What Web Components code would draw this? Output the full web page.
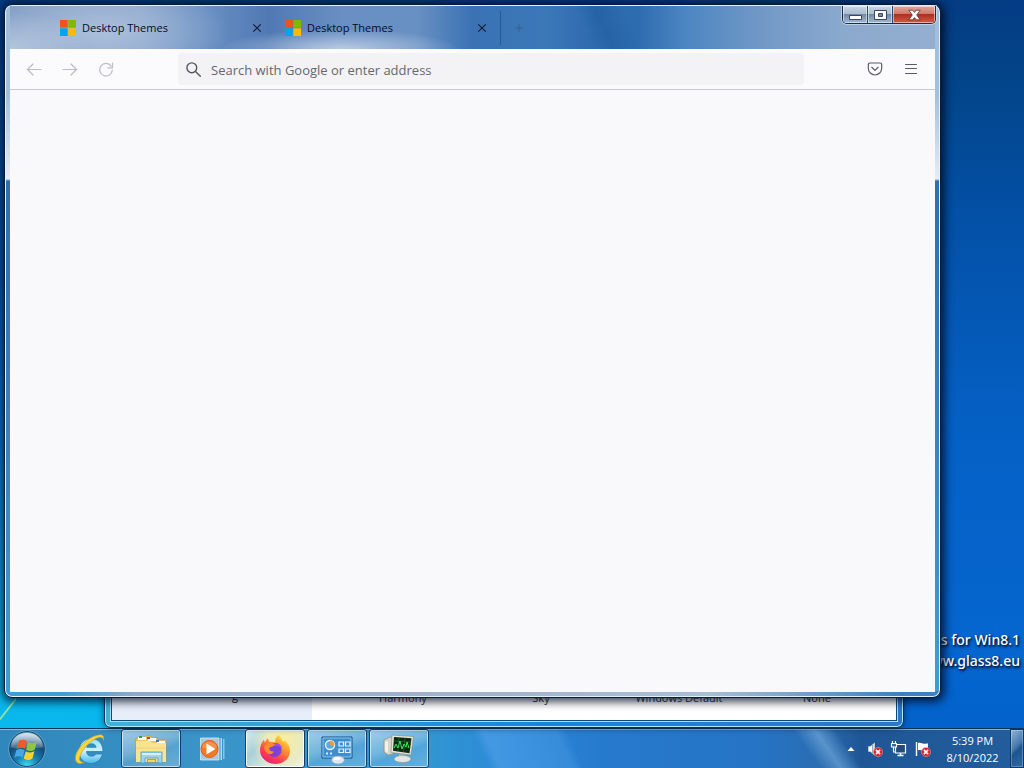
<!DOCTYPE html>
<html lang="en">
<head>
<meta charset="utf-8">
<meta name="viewport" content="width=device-width, initial-scale=1">
<title>Desktop</title>
<style>
html, body {
    height: 100%;
    margin: 0;
}
body {
    font-family: "Open Sans", "Noto Sans", sans-serif;
    font-size: 11px;
    overflow: hidden;
}
</style>
</head>
<body>
<aero-desktop>
    <desktop-label slot="label"></desktop-label>
    <themes-window slot="windows"></themes-window>
    <browser-window slot="windows">
        <browser-tab slot="tabs">Desktop Themes</browser-tab>
        <browser-tab slot="tabs" class="last">Desktop Themes</browser-tab>
    </browser-window>
    <task-bar slot="taskbar"></task-bar>
</aero-desktop>

<script>
class AeroDesktop extends HTMLElement {
    constructor() {
        super();
        this.attachShadow({ mode: 'open' });
    }

    connectedCallback() {
        this.shadowRoot.innerHTML = `
            <style>
            :host {
                display: flex;
                flex-direction: column;
                height: 100vh;
                overflow: hidden;
                background:
                    linear-gradient(128deg, transparent 44%, #4fd0b0 47%, #b5efa0 50%, #4fd0b0 53%, transparent 56%) 0 calc(100% - 48px) / 16px 22px no-repeat,
                    radial-gradient(ellipse 460px 560px at 40px 108%, #06c2f2 0%, #0bb0ea 35%, rgba(8, 140, 220, 0.5) 70%, transparent 100%),
                    linear-gradient(180deg, #043c84 0%, #034488 10%, #0350a6 28%, #0560c4 55%, #0566d0 85%, #0260c8 100%);
            }
            .area {
                flex: 1;
                position: relative;
            }
            </style>
            <div class="area">
                <slot name="label"></slot>
                <slot name="windows"></slot>
            </div>
            <slot name="taskbar"></slot>
        `;
    }
}

class DesktopLabel extends HTMLElement {
    constructor() {
        super();
        this.attachShadow({ mode: 'open' });
    }

    connectedCallback() {
        this.shadowRoot.innerHTML = `
            <style>
            :host {
                display: block;
                position: absolute;
                right: 4px;
                bottom: 57px;
                text-align: right;
                color: #fff;
                font-family: "Noto Sans", "Open Sans", sans-serif;
                font-size: 14px;
                font-weight: 500;
                line-height: 21px;
                text-shadow: 1px 1px 2px #001a40, 1px 2px 3px #001a40;
                white-space: nowrap;
            }
            </style>
            <div>Aero Glass for Win8.1</div>
            <div>www.glass8.eu</div>
        `;
    }
}

// Window behind the browser, only its lower edge is visible
class ThemesWindow extends HTMLElement {
    constructor() {
        super();
        this.attachShadow({ mode: 'open' });
    }

    connectedCallback() {
        this.shadowRoot.innerHTML = `
            <style>
            :host {
                display: flex;
                position: absolute;
                left: 104px;
                right: 120px;
                top: 60%;
                bottom: 0;
                box-sizing: border-box;
                padding: 6px;
                border: 1px solid #0a3358;
                border-radius: 7px;
                background: linear-gradient(90deg, #3fb2d6 0%, #2f9fd8 25%, #1585e0 55%, #2a78d0 88%, #2a78c8 100%);
                box-shadow: inset 0 0 0 1px #b9e4f5, 0 0 6px rgba(0, 20, 50, 0.6);
            }
            .content {
                flex: 1;
                display: flex;
                border: 1px solid #0d4a78;
                outline: 1px solid #a8def2;
                background: #fff;
            }
            nav {
                width: 200px;
                background: #e8eef9;
                display: flex;
                align-items: flex-end;
                justify-content: center;
            }
            nav span {
                padding: 0 0 17px 46px;
            }
            ul {
                flex: 1;
                display: grid;
                grid-template-columns: 182px 94px 182px 94px;
                align-content: end;
                margin: 0;
                padding: 0 0 15px;
                list-style: none;
                text-align: center;
                color: #333;
            }
            </style>
            <div class="content">
                <nav><span>g</span></nav>
                <ul>
                    <li>Harmony</li>
                    <li>Sky</li>
                    <li>Windows Default</li>
                    <li>None</li>
                </ul>
            </div>
        `;
    }
}

class BrowserTab extends HTMLElement {
    constructor() {
        super();
        this.attachShadow({ mode: 'open' });
    }

    connectedCallback() {
        this.shadowRoot.innerHTML = `
            <style>
            :host {
                display: flex;
                align-items: center;
                gap: 6px;
                box-sizing: border-box;
                width: 225px;
                height: 34px;
                padding: 0 9px 0 10px;
                color: #060a1c;
            }
            :host(.last) {
                border-right: 1px solid rgba(20, 60, 120, 0.45);
                width: 226px;
            }
            .title {
                flex: 1;
                white-space: nowrap;
            }
            button {
                display: flex;
                padding: 4px;
                border: 0;
                background: none;
            }
            </style>
            <svg width="16" height="16" viewBox="0 0 16 16">
                <path fill="#f25022" d="M0 0h7.7v7.7H0z"/>
                <path fill="#7fba00" d="M8.3 0H16v7.7H8.3z"/>
                <path fill="#00a4ef" d="M0 8.3h7.7V16H0z"/>
                <path fill="#ffb900" d="M8.3 8.3H16V16H8.3z"/>
            </svg>
            <span class="title"><slot></slot></span>
            <button type="button" aria-label="Close tab">
                <svg width="10" height="10" viewBox="0 0 10 10" stroke="#10182c" stroke-width="1.1"><path d="M1.3 1.3l7.4 7.4M8.7 1.3L1.3 8.7"/></svg>
            </button>
        `;
    }
}

class CaptionButtons extends HTMLElement {
    constructor() {
        super();
        this.attachShadow({ mode: 'open' });
    }

    connectedCallback() {
        this.shadowRoot.innerHTML = `
            <style>
            :host {
                display: flex;
                height: 18px;
                box-sizing: border-box;
                border: 1px solid #1d2c48;
                border-top: 0;
                border-radius: 0 0 5px 5px;
                overflow: hidden;
                box-shadow: 0 0 0 1px rgba(220, 235, 250, 0.6);
            }
            button {
                display: flex;
                align-items: center;
                justify-content: center;
                width: 25px;
                padding: 0;
                border: 0;
                border-right: 1px solid #33486a;
                background: linear-gradient(#c8d5e4 0, #a9bbd0 48%, #7189a8 50%, #a2b9d2 100%);
                box-shadow: inset 0 0 0 1px rgba(255, 255, 255, 0.5);
            }
            .close {
                width: 42px;
                border-right: 0;
                background: linear-gradient(#e3a79b 0, #cf7768 48%, #b02f1c 50%, #cf5d44 100%);
            }
            </style>
            <button type="button" aria-label="Minimize">
                <svg width="13" height="12" viewBox="0 0 13 12"><path fill="#fff" stroke="#3b4760" d="M.5 6.5h12v4H.5z"/></svg>
            </button>
            <button type="button" aria-label="Maximize">
                <svg width="13" height="12" viewBox="0 0 13 12"><path fill="#fff" fill-rule="evenodd" stroke="#3b4760" d="M.5 1.5h12v9H.5zM4.5 4.5v3h4v-3z"/></svg>
            </button>
            <button type="button" class="close" aria-label="Close">
                <svg width="13" height="12" viewBox="0 0 13 12"><path fill="#fff" stroke="#5b3038" stroke-width=".8" d="M.8 1.2h4l1.7 2.2 1.700-2.200h4L8.700 6l3.500 4.800h-4L6.500 8.600l-1.700 2.200h-4L4.300 6z"/></svg>
            </button>
        `;
    }
}

class BrowserToolbar extends HTMLElement {
    constructor() {
        super();
        this.attachShadow({ mode: 'open' });
    }

    connectedCallback() {
        this.shadowRoot.innerHTML = `
            <style>
            :host {
                display: flex;
                align-items: center;
                box-sizing: border-box;
                height: 41px;
                padding: 0 6px;
                background: #fbfbfe;
                border-bottom: 1px solid #c9c9ce;
            }
            button {
                display: flex;
                align-items: center;
                justify-content: center;
                width: 36px;
                height: 32px;
                padding: 0;
                border: 0;
                background: none;
                color: #5b5b66;
            }
            button:disabled {
                color: #bcbcc1;
            }
            svg {
                fill: none;
                stroke: currentColor;
                stroke-linecap: round;
                stroke-linejoin: round;
            }
            label {
                flex: 1;
                display: flex;
                align-items: center;
                gap: 9px;
                height: 32px;
                margin: 0 53px 0 54px;
                padding: 0 8px 0 7px;
                box-sizing: border-box;
                border-radius: 4px;
                background: #f3f3f6;
                color: #55555d;
            }
            input {
                flex: 1;
                min-width: 0;
                padding: 2px 0 0;
                border: 0;
                outline: 0;
                background: none;
                font-family: inherit;
                font-size: 13px;
                color: #15141a;
            }
            input::placeholder {
                color: #66666e;
                opacity: 1;
            }
            </style>
            <button type="button" aria-label="Back" disabled>
                <svg width="16" height="16" viewBox="0 0 16 16" stroke-width="1.2"><path d="M15 8.500H1.500M7 3L1.500 8.500 7 14"/></svg>
            </button>
            <button type="button" aria-label="Forward" disabled>
                <svg width="16" height="16" viewBox="0 0 16 16" stroke-width="1.2"><path d="M1 8.500h13.500M9 3l5.500 5.500L9 14"/></svg>
            </button>
            <button type="button" aria-label="Reload" disabled>
                <svg width="16" height="16" viewBox="0 0 16 16" stroke-width="1.2"><path d="M13.2 5.100A6.300 6.300 0 1 0 14.300 9.100M14.500 2v4.800H9.700"/></svg>
            </button>
            <label>
                <svg width="17" height="17" viewBox="0 0 17 17" stroke-width="1.4"><circle cx="6.8" cy="6.8" r="4.9"/><path d="M10.500 10.500l4.800 4.800"/></svg>
                <input type="text" placeholder="Search with Google or enter address" aria-label="Search with Google or enter address">
            </label>
            <button type="button" aria-label="Save to Pocket">
                <svg width="16" height="16" viewBox="0 0 16 16" stroke-width="1.2"><path d="M3 2h10a1.700 1.700 0 0 1 1.700 1.700v3.600a6.700 6.700 0 0 1-13.400 0V3.700A1.700 1.700 0 0 1 3 2zM4.800 6.300L8 9.400l3.200-3.100"/></svg>
            </button>
            <button type="button" aria-label="Open application menu">
                <svg width="14" height="14" viewBox="0 0 14 14" stroke-width="1.1"><path d="M1.500 2.500h11M1.500 6.500h11M1.500 11.500h11"/></svg>
            </button>
        `;
    }
}

class BrowserWindow extends HTMLElement {
    constructor() {
        super();
        this.attachShadow({ mode: 'open' });
    }

    connectedCallback() {
        this.shadowRoot.innerHTML = `
            <style>
            :host {
                display: flex;
                flex-direction: column;
                position: absolute;
                left: 4px;
                right: 83px;
                top: 4px;
                bottom: 30px;
                box-sizing: border-box;
                padding: 1px 5px 5px;
                border: 1px solid #061c3c;
                border-radius: 8px;
                background:
                    linear-gradient(90deg, transparent 6%, #8ea9cb 14%, #a3b3c9 50%, #a9bfd5 75%, #3f80bd 96%) 0 100% / 100% 6px no-repeat,
                    linear-gradient(180deg, #9fbddb 0, #a4bfdd 90px, #e6ecf4 174px, #2f6fae 176px, #3c80bc 60%, #3f9fd0 100%);
                box-shadow: inset 0 0 0 1px #e4f1fb, 1px 1px 8px 3px rgba(0, 8, 28, 0.75);
            }
            header {
                display: flex;
                align-items: center;
                height: 43px;
                padding-left: 40px;
                background:
                    radial-gradient(ellipse 120px 20px at 330px 100%, rgba(205, 218, 236, 0.8), rgba(205, 218, 236, 0.4) 50%, transparent),
                    radial-gradient(ellipse 130px 50px at 90px 60%, rgba(190, 206, 228, 0.7), rgba(190, 206, 228, 0.3) 60%, transparent),
                    radial-gradient(ellipse 80px 36px at 0 100%, rgba(200, 212, 228, 0.7), transparent),
                    linear-gradient(68deg, transparent 62%, rgba(22, 82, 150, 0.35) 64%, transparent 67%),
                    linear-gradient(90deg, #7d9ac2 0, #84a0c8 14%, #6a90c2 21%, #5079b4 28%, #6a90c2 36%, #6890c2 44%, #3a72b4 50%, #3b78b8 58%, #2e6aae 63%, #2e6cb0 68%, #4c86c2 73%, #7098c6 81%, #8ba9cd 90%, #94afd0 100%);
            }
            .new-tab {
                display: flex;
                padding: 4px;
                margin-left: 9px;
                border: 0;
                background: none;
            }
            caption-buttons {
                align-self: flex-start;
                margin: 0 -1px 0 auto;
            }
            main {
                flex: 1;
                background: #f9f9fb;
            }
            </style>
            <header>
                <slot name="tabs"></slot>
                <button type="button" class="new-tab" aria-label="New tab">
                    <svg width="10" height="10" viewBox="0 0 10 10" stroke="#3d5f85" stroke-width="1"><path d="M5 1v8M1 5h8"/></svg>
                </button>
                <caption-buttons></caption-buttons>
            </header>
            <browser-toolbar></browser-toolbar>
            <main></main>
        `;
    }
}

class TaskButton extends HTMLElement {
    constructor() {
        super();
        this.attachShadow({ mode: 'open' });
    }

    connectedCallback() {
        this.shadowRoot.innerHTML = `
            <style>
            :host {
                display: block;
                width: 60px;
            }
            button {
                display: flex;
                align-items: center;
                justify-content: center;
                box-sizing: border-box;
                width: 100%;
                height: 100%;
                padding: 0;
                border: 1px solid transparent;
                border-radius: 3px;
                background: none;
            }
            :host([open]) button {
                border-color: #123f6e;
                background: linear-gradient(160deg, rgba(255, 255, 255, 0.55) 0, rgba(255, 255, 255, 0.3) 45%, rgba(255, 255, 255, 0.15) 60%, rgba(255, 255, 255, 0.25) 100%);
                box-shadow: inset 0 0 0 1px rgba(255, 255, 255, 0.6);
            }
            :host([active]) button {
                background: radial-gradient(circle at 65% 30%, #f8eea0 0, #e9ebc0 40%, transparent 70%), linear-gradient(135deg, #e0eef0 0, #a8cfd8 30%, #dfe7d8 60%, #f6f6e6 100%);
                box-shadow: inset 0 0 0 1px #fff;
            }
            </style>
            <button type="button" aria-label="${this.getAttribute('name')}"><slot></slot></button>
        `;
    }
}

class SystemTray extends HTMLElement {
    constructor() {
        super();
        this.attachShadow({ mode: 'open' });
    }

    connectedCallback() {
        this.shadowRoot.innerHTML = `
            <style>
            :host {
                display: flex;
                align-items: stretch;
                color: #fff;
            }
            button {
                display: flex;
                align-items: center;
                justify-content: center;
                width: 24px;
                padding: 0;
                border: 0;
                background: none;
            }
            time {
                display: flex;
                flex-direction: column;
                justify-content: center;
                width: 75px;
                text-align: center;
                line-height: 17px;
            }
            .peek {
                width: 14px;
                border: 1px solid #14355c;
                background: linear-gradient(135deg, #8fb4d6 0, #4478ad 45%, #1d5590 55%, #2f69a4 100%);
                box-shadow: inset 0 0 0 1px rgba(255, 255, 255, 0.25);
            }
            </style>
            <button type="button" aria-label="Show hidden icons">
                <svg width="8" height="6" viewBox="0 0 8 6"><path fill="#fff" d="M4 1l3.500 4h-7z"/></svg>
            </button>
            <button type="button" aria-label="Volume muted">
                <svg width="18" height="18" viewBox="0 0 18 18">
                    <path fill="#fff" stroke="#2d4c70" stroke-width=".6" d="M2 6h2.400L9 2v14l-4.600-4H2z"/>
                    <path fill="#9aa9bb" d="M6 5l1.400-1.200v10.400L6 13z"/>
                    <circle cx="12" cy="12" r="4.600" fill="#d8242c" stroke="#f3a8a8" stroke-width=".5"/>
                    <path stroke="#fff" stroke-width="1.600" d="M9.900 9.900l4.200 4.200M14.100 9.900l-4.200 4.200"/>
                </svg>
            </button>
            <button type="button" aria-label="Network">
                <svg width="18" height="18" viewBox="0 0 18 18" fill="none" stroke="#fff">
                    <path fill="#244c78" stroke-width="1.200" d="M5.500 4.500h10v8.500h-10z"/>
                    <path stroke-width="1.500" d="M7.500 15.500h6M10.500 13v2"/>
                    <path fill="#3b6594" stroke-width="1.100" d="M1.500 3.500h5v3.500h-5zM2.500 1v2M5.500 1v2M3.500 7v5H5.500"/>
                </svg>
            </button>
            <button type="button" aria-label="Action Center">
                <svg width="18" height="18" viewBox="0 0 18 18">
                    <path stroke="#fff" stroke-width="1.400" d="M2.500 2v14"/>
                    <path fill="#fff" d="M4 3c3-.8 4 .8 6 .8 1.700 0 2.500-.5 4-.3v7c-2-.4-3 .4-5 0-1.700-.4-3-.9-5-.3z"/>
                    <circle cx="12" cy="12" r="4.600" fill="#d8242c" stroke="#f3a8a8" stroke-width=".5"/>
                    <path stroke="#fff" stroke-width="1.600" d="M9.900 9.900l4.200 4.200M14.100 9.900l-4.200 4.200"/>
                </svg>
            </button>
            <time datetime="2022-08-10T17:39"><span>5:39 PM</span><span>8/10/2022</span></time>
            <button type="button" class="peek" aria-label="Show desktop"></button>
        `;
    }
}

class TaskBar extends HTMLElement {
    constructor() {
        super();
        this.attachShadow({ mode: 'open' });
    }

    connectedCallback() {
        this.shadowRoot.innerHTML = `
            <style>
            :host {
                display: flex;
                align-items: stretch;
                gap: 2px;
                height: 40px;
                box-sizing: border-box;
                border-top: 1px solid #0a3560;
                box-shadow: inset 0 1px 0 rgba(190, 225, 245, 0.6);
                background:
                    linear-gradient(65deg, transparent 47%, rgba(90, 165, 235, 0.5) 48%, rgba(90, 165, 235, 0.3) 55%, transparent 56%),
                    linear-gradient(55deg, transparent 78%, rgba(120, 175, 225, 0.6) 80%, transparent 82%),
                    linear-gradient(90deg, #2f86bb 0, #3a94c8 20%, #3296d2 42%, #2a88d8 50%, #2679cc 60%, #2574c6 74%, #2b6db2 80%, #1f5796 84%, #235d9b 100%);
            }
            .start {
                display: flex;
                align-items: center;
                justify-content: center;
                width: 57px;
                padding: 0 3px 0 0;
                border: 0;
                background: none;
            }
            system-tray {
                margin-left: auto;
            }
            </style>
            <button type="button" class="start" aria-label="Start">
                <svg width="38" height="38" viewBox="0 0 38 38">
                    <defs>
                        <radialGradient id="orb" cx=".5" cy="1" r=".95">
                            <stop offset="0" stop-color="#46e0f4"/>
                            <stop offset=".35" stop-color="#1583b4"/>
                            <stop offset=".7" stop-color="#164a78"/>
                            <stop offset="1" stop-color="#6f9bb8"/>
                        </radialGradient>
                        <linearGradient id="shine" x2="0" y2="1">
                            <stop offset="0" stop-color="#fff" stop-opacity=".75"/>
                            <stop offset="1" stop-color="#fff" stop-opacity=".15"/>
                        </linearGradient>
                    </defs>
                    <circle cx="19" cy="19" r="17.500" fill="url(#orb)" stroke="#12395c"/>
                    <circle cx="19" cy="19" r="18.300" fill="none" stroke="#8fc3de" stroke-width=".7" opacity=".7"/>
                    <path fill="url(#shine)" d="M3 17C4 8 10 3 19 3s15 5 16 14c-7 3-10-1-16 0S9 20 3 17z"/>
                    <g transform="translate(-3.500 -3) scale(1.180)">
                        <path fill="#ef5a28" d="M12 12c2.500-1.600 4.600-1.500 7 0l-1.700 6.600c-2.400-1.500-4.500-1.600-7 0z"/>
                        <path fill="#8fc63d" d="M20 12.700c2.500 1.500 4.600 1.400 7.500-.2l-1.800 6.600c-2.800 1.700-5 1.700-7.400.2z"/>
                        <path fill="#49a6e8" d="M10 19.800c2.500-1.600 4.600-1.500 7 0l-1.700 6.200c-2.400-1.500-4.500-1.600-7 0z"/>
                        <path fill="#fdd032" d="M18 20.500c2.500 1.500 4.600 1.400 7.400-.2l-1.700 6.300c-2.900 1.700-5 1.700-7.400.2z"/>
                    </g>
                </svg>
            </button>
            <task-button name="Internet Explorer">
                <svg width="34" height="34" viewBox="0 0 34 34">
                    <defs>
                        <linearGradient id="ie" x2="0" y2="1"><stop offset="0" stop-color="#8fe0fb"/><stop offset=".5" stop-color="#cdf1fd"/><stop offset="1" stop-color="#45b8ea"/></linearGradient>
                    </defs>
                    <path fill="url(#ie)" stroke="#2383b8" stroke-width=".8" fill-rule="evenodd" d="M31 19.500H14.500c.2 3 2.200 4.700 5 4.700 2 0 3.500-.7 4.300-2.100h6.600C29 27.500 25 31.500 19 31.500c-7 0-12-5-12-12.300S12 6.500 19 6.500c7.500 0 12 5.200 12 13zM14.700 15.300h9.400c-.3-2.400-2-3.600-4.600-3.600s-4.300 1.300-4.800 3.600z"/>
                    <path fill="#f9d53a" stroke="#c9962a" stroke-width=".6" d="M31.500 8.500c.8-3.600-.2-5.900-3.500-5.700C21 3.200 11 9.500 5.500 19 2 25 2.900 31 7.500 31.500c1.600.2 3.500-.5 5-1.500-3.200.8-5.300-1-4.900-4C8.300 20 16 10 24 6.500c4.500-2 7-1.500 7.500 2z"/>
                </svg>
            </task-button>
            <task-button name="Windows Explorer" open>
                <svg width="34" height="32" viewBox="0 0 34 32">
                    <path fill="#e8c95f" stroke="#b9933a" stroke-width=".6" d="M2 5h8l1-2h6l1 2h5l1 2h8v22H2z"/>
                    <path fill="#fff" d="M4 4h8v3H4zM14 5h8v3h-8zM23 8h8v3h-8z"/>
                    <path fill="#3f9b47" d="M5 3h3v2H5z"/>
                    <path fill="#c8452f" d="M13 4h3v2h-3z"/>
                    <path fill="#3479c0" d="M22 7h3v2h-3z"/>
                    <path fill="#f8e38f" d="M2 8h14l2 2h14v19H2z"/>
                    <path fill="#efd272" d="M2 14h30v2H2z" opacity=".5"/>
                    <path fill="#9bd4ef" stroke="#4a9cc8" stroke-width=".8" d="M7 19h21v11h-4v-5H11v5H7z"/>
                    <path fill="#d9f1fb" d="M8 20h19v2H8z"/>
                    <path fill="#6aaad0" d="M13 26h9v3h-9z"/>
                    <path fill="#f3d56b" d="M14 27h7v2h-7z"/>
                </svg>
            </task-button>
            <task-button name="Windows Media Player">
                <svg width="28" height="26" viewBox="0 0 28 26">
                    <path fill="#b9dcf0" d="M24 3h1.500v20H24z" opacity=".65"/>
                    <path fill="#c9e6f5" d="M21.500 2H23v22h-1.500z" opacity=".85"/>
                    <path fill="#a9c9df" stroke="#d5eaf5" stroke-width=".8" d="M1.500 2h18.500v22H1.500z"/>
                    <circle cx="10.500" cy="13" r="8.500" fill="#f07a26" stroke="#d9601a"/>
                    <path fill="#f8a560" d="M3 11a8 8 0 0 1 15 0c-5 2-10 2-15 0z" opacity=".6"/>
                    <path fill="#fff" d="M7.500 7.500l9 5.500-9 5.500z"/>
                </svg>
            </task-button>
            <task-button name="Firefox" open active>
                <svg width="32" height="32" viewBox="0 0 32 32">
                    <defs>
                        <linearGradient id="fx" x1=".85" x2=".2" y2="1"><stop offset="0" stop-color="#fff04d"/><stop offset=".35" stop-color="#ff9a2e"/><stop offset=".7" stop-color="#ff3f4f"/><stop offset="1" stop-color="#e3188a"/></linearGradient>
                    </defs>
                    <path fill="url(#fx)" d="M19 2c3 2.300 4.200 4.400 4.600 6.500 1.100.2 1.600-.4 1.500-1.500C29.500 10.500 31 14 31 18c0 7.500-6.500 13-14.500 13S1 25 1 17.500c0-4.500 1.500-8 3.800-10.700l.8 2.400L8.800 5l1.500 4c2-.6 4-.4 5.700.5C16 6.500 17 4 19 2z"/>
                    <circle cx="15.500" cy="17" r="7" fill="#7a42d8"/>
                    <path fill="#a34cf0" d="M14 11c4-2.500 9 .5 9 5-1.500-2.500-4-3.500-7-3z"/>
                    <path fill="#ff8d2d" d="M5 14c2-4 6-5 11-3-1 2.500-3 3-5.500 3.500-.8 2.500 1.500 4.500 4.500 4-1 2.500-4.500 3.500-7 1.500-1.500-1.200-2.700-3-3-6z"/>
                </svg>
            </task-button>
            <task-button name="Personalization" open>
                <svg width="34" height="32" viewBox="0 0 34 32">
                    <path fill="#3f8fd0" stroke="#174f86" d="M2 4h30v21H2z"/>
                    <path fill="none" stroke="#8cc6ee" d="M3 5h28v19H3z"/>
                    <circle cx="10" cy="12" r="4.500" fill="#5aa9df" stroke="#e5f5ff" stroke-width="1.400"/>
                    <path fill="#f39b2e" d="M10 12V7.500a4.500 4.500 0 0 1 4.500 4.500z"/>
                    <path fill="none" stroke="#e0f3ff" stroke-width="1.200" d="M19 9h4.500v4H19zM25.500 9H30v4h-4.500zM19 16h4.500v3.500H19zM25.500 16H30v3.500h-4.500z"/>
                    <path stroke="#d6eeff" stroke-width="2" d="M6 20.500h2M10 20.500h2"/>
                    <ellipse cx="18" cy="27" rx="6.500" ry="4" fill="#dfe6ec" stroke="#8a9aa8" stroke-width=".6"/>
                    <ellipse cx="17" cy="25.500" rx="3.500" ry="1.500" fill="#fff"/>
                </svg>
            </task-button>
            <task-button name="System Monitor" open>
                <svg width="34" height="32" viewBox="0 0 34 32">
                    <path fill="#d5d5c8" stroke="#86877c" stroke-width=".6" d="M2 7l6-3 3 2v15l-5 1-4-3z"/>
                    <path fill="#f2f2e8" d="M3 9l3-1v12l-3-2z"/>
                    <path fill="#e4e4d8" stroke="#85867b" stroke-width=".6" d="M10 2l21.500 1.500-2.500 18.500L9 19.500z"/>
                    <path fill="#0c2a12" d="M12 4l17.500 1.300-2 15L11 17.800z"/>
                    <path fill="none" stroke="#1f7a2e" stroke-width=".6" d="M12 8l17 1M11.500 13l17 1.500M17 4.500l-1 14M23 5l-1.500 14"/>
                    <path fill="none" stroke="#3fe052" stroke-width="1" d="M12 15l2-4 2 4 2-7 2 8 2-5 2 3 1-5 2 6"/>
                    <path fill="#b9bab0" d="M17 21l6 .7v3h-6z"/>
                    <ellipse cx="20.500" cy="26" rx="8.500" ry="3.500" fill="#e3e5e2" stroke="#8d908c" stroke-width=".6"/>
                </svg>
            </task-button>
            <system-tray></system-tray>
        `;
    }
}

customElements.define('aero-desktop', AeroDesktop);
customElements.define('desktop-label', DesktopLabel);
customElements.define('themes-window', ThemesWindow);
customElements.define('browser-tab', BrowserTab);
customElements.define('caption-buttons', CaptionButtons);
customElements.define('browser-toolbar', BrowserToolbar);
customElements.define('browser-window', BrowserWindow);
customElements.define('task-button', TaskButton);
customElements.define('system-tray', SystemTray);
customElements.define('task-bar', TaskBar);
</script>
</body>
</html>
